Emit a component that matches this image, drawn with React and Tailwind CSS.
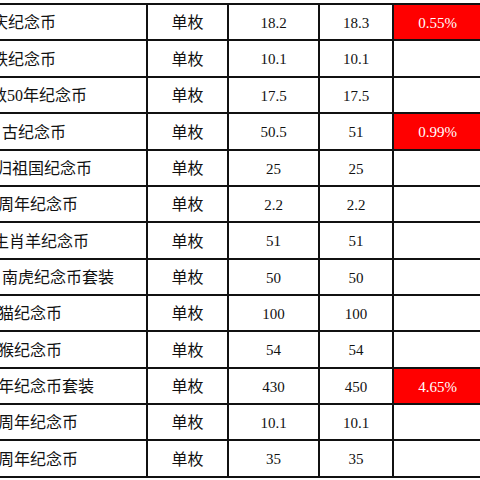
const rows = [
  { name: '庆纪念币', shift: '-ml-[8px]', buy: '18.2', sell: '18.3', rise: '0.55%' },
  { name: '铁纪念币', shift: '-ml-[8px]', buy: '10.1', sell: '10.1' },
  { name: '数50年纪念币', shift: '-ml-[9px]', buy: '17.5', sell: '17.5' },
  { name: '古纪念币', shift: 'ml-[2px]', buy: '50.5', sell: '51', rise: '0.99%' },
  { name: '归祖国纪念币', shift: '-ml-[4px]', buy: '25', sell: '25' },
  { name: '周年纪念币', shift: '-ml-[2px]', buy: '2.2', sell: '2.2' },
  { name: '生肖羊纪念币', shift: '-ml-[7px]', buy: '51', sell: '51' },
  { name: '南虎纪念币套装', shift: 'ml-[2px]', buy: '50', sell: '50' },
  { name: '猫纪念币', shift: '-ml-[2px]', buy: '100', sell: '100' },
  { name: '猴纪念币', shift: '-ml-[2px]', buy: '54', sell: '54' },
  { name: '年纪念币套装', shift: '-ml-[2px]', buy: '430', sell: '450', rise: '4.65%' },
  { name: '周年纪念币', shift: '-ml-[2px]', buy: '10.1', sell: '10.1' },
  { name: '周年纪念币', shift: '-ml-[2px]', buy: '35', sell: '35' },
];

const font = { fontFamily: '"Liberation Serif", "Noto Sans CJK SC", serif' };

export default function App() {
  return (
    <div className="w-[480px] h-[480px] overflow-hidden bg-white" style={font}>
      <div className="mt-[3px] w-[483px] bg-[#111] py-[2px] pr-[2px] grid gap-[2px] grid-cols-[146px_79px_89px_72px_87px] grid-rows-[34px_35px_34px_35px_34px_34px_35px_34px_34px_35px_34px_34px_35px] text-[#111]">
        {rows.map((r, i) => (
          <div key={i} className="contents">
            <div className="bg-white flex items-center overflow-hidden whitespace-nowrap">
              <span className={`${r.shift} text-[16px] leading-none pt-[2px]`}>{r.name}</span>
            </div>
            <div className="bg-white flex items-center justify-center text-[16px] leading-none pt-[2px]">
              单枚
            </div>
            <div className="bg-white flex items-center justify-center text-[15px] leading-none pt-[2px]">
              {r.buy}
            </div>
            <div className="bg-white flex items-center justify-center text-[15px] leading-none pt-[2px]">
              {r.sell}
            </div>
            <div
              className={
                r.rise
                  ? 'bg-[#ff0000] text-white flex items-center justify-center text-[15px] leading-none pt-[2px]'
                  : 'bg-white'
              }
            >
              {r.rise}
            </div>
          </div>
        ))}
      </div>
    </div>
  );
}
